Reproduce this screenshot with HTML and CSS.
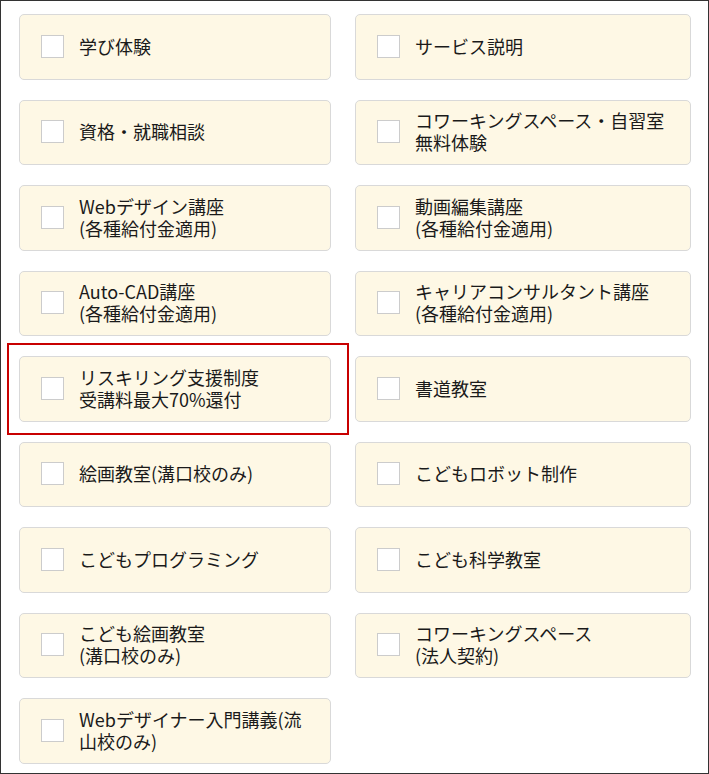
FILE: index.html
```html
<!DOCTYPE html>
<html lang="ja">
<head>
<meta charset="utf-8">
<title>選択項目</title>
<link rel="stylesheet" href="styles.css">
</head>
<body>
<div class="page">
  <ul class="options">
    <li class="option"><span class="box"></span><span class="label">学び体験</span></li>
    <li class="option"><span class="box"></span><span class="label">サービス説明</span></li>
    <li class="option"><span class="box"></span><span class="label">資格・就職相談</span></li>
    <li class="option"><span class="box"></span><span class="label">コワーキングスペース・自習室<br>無料体験</span></li>
    <li class="option"><span class="box"></span><span class="label">Webデザイン講座<br>(各種給付金適用)</span></li>
    <li class="option"><span class="box"></span><span class="label">動画編集講座<br>(各種給付金適用)</span></li>
    <li class="option"><span class="box"></span><span class="label">Auto-CAD講座<br>(各種給付金適用)</span></li>
    <li class="option"><span class="box"></span><span class="label">キャリアコンサルタント講座<br>(各種給付金適用)</span></li>
    <li class="option option-marked"><span class="box"></span><span class="label">リスキリング支援制度<br>受講料最大70%還付</span><span class="mark"></span></li>
    <li class="option"><span class="box"></span><span class="label">書道教室</span></li>
    <li class="option"><span class="box"></span><span class="label">絵画教室(溝口校のみ)</span></li>
    <li class="option"><span class="box"></span><span class="label">こどもロボット制作</span></li>
    <li class="option"><span class="box"></span><span class="label">こどもプログラミング</span></li>
    <li class="option"><span class="box"></span><span class="label">こども科学教室</span></li>
    <li class="option"><span class="box"></span><span class="label">こども絵画教室<br>(溝口校のみ)</span></li>
    <li class="option"><span class="box"></span><span class="label">コワーキングスペース<br>(法人契約)</span></li>
    <li class="option"><span class="box"></span><span class="label">Webデザイナー入門講義(流山校のみ)</span></li>
  </ul>
</div>
</body>
</html>
```

FILE: styles.css
```css
html, body {
  margin: 0;
  padding: 0;
  background: #ffffff;
}

.page {
  box-sizing: border-box;
  width: 709px;
  height: 774px;
  border: 1px solid #333333;
  padding: 13px 17px 0 18px;
  font-family: "Noto Sans CJK JP", "Noto Sans", sans-serif;
  color: #1a1a1a;
}

.options {
  list-style: none;
  margin: 0;
  padding: 0;
  display: grid;
  grid-template-columns: 312px 336px;
  grid-auto-rows: 65.5px;
  column-gap: 24px;
  row-gap: 20px;
}

.option {
  position: relative;
  box-sizing: border-box;
  display: flex;
  align-items: center;
  background: #fef8e5;
  border: 1px solid #d9d9d9;
  border-radius: 5px;
  padding: 0 18px 0 21px;
}

.box {
  flex: none;
  box-sizing: border-box;
  width: 23px;
  height: 23px;
  background: #ffffff;
  border: 1px solid #cccccc;
  margin-right: 15px;
  margin-top: -1px;
}

.label {
  font-size: 18px;
  line-height: 22px;
  margin-top: -2px;
}

.mark {
  position: absolute;
  top: -14px;
  left: -13px;
  right: -19px;
  bottom: -14px;
  border: 2px solid #c80000;
  pointer-events: none;
}
```
